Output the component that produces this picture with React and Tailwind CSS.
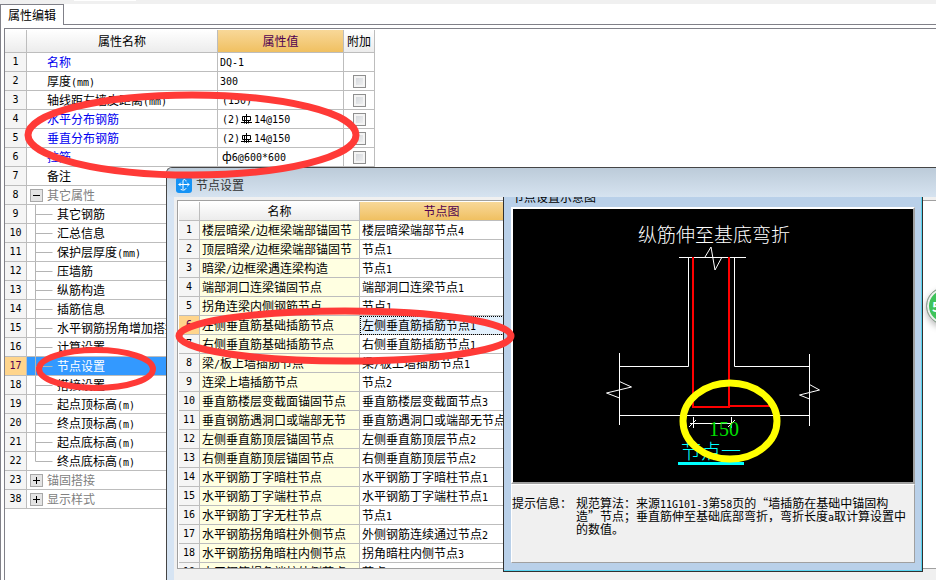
import React from "react";

const properties = [
  { no: 1, name: "名称", value: "DQ-1", blue: true, noCheck: true },
  { no: 2, name: "厚度(mm)", value: "300" },
  { no: 3, name: "轴线距左墙皮距离(mm)", value: "(150)", inset: true },
  { no: 4, name: "水平分布钢筋", value: "(2)#14@150", blue: true, inset: true },
  { no: 5, name: "垂直分布钢筋", value: "(2)#14@150", blue: true, inset: true },
  { no: 6, name: "拉筋", value: "ф6@600*600", blue: true, inset: true },
  { no: 7, name: "备注", value: "" },
  { no: 8, name: "其它属性", group: "minus" },
  { no: 9, name: "其它钢筋", child: true },
  { no: 10, name: "汇总信息", child: true },
  { no: 11, name: "保护层厚度(mm)", child: true },
  { no: 12, name: "压墙筋", child: true },
  { no: 13, name: "纵筋构造", child: true },
  { no: 14, name: "插筋信息", child: true },
  { no: 15, name: "水平钢筋拐角增加搭接", child: true },
  { no: 16, name: "计算设置", child: true },
  { no: 17, name: "节点设置", child: true, selected: true },
  { no: 18, name: "搭接设置", child: true },
  { no: 19, name: "起点顶标高(m)", child: true },
  { no: 20, name: "终点顶标高(m)", child: true },
  { no: 21, name: "起点底标高(m)", child: true },
  { no: 22, name: "终点底标高(m)", child: true, last: true },
  { no: 23, name: "锚固搭接", group: "plus" },
  { no: 38, name: "显示样式", group: "plus" },
];

const nodes = [
  ["楼层暗梁/边框梁端部锚固节", "楼层暗梁端部节点4"],
  ["顶层暗梁/边框梁端部锚固节", "节点1"],
  ["暗梁/边框梁遇连梁构造", "节点1"],
  ["端部洞口连梁锚固节点", "端部洞口连梁节点1"],
  ["拐角连梁内侧钢筋节点", "节点1"],
  ["左侧垂直筋基础插筋节点", "左侧垂直筋插筋节点1"],
  ["右侧垂直筋基础插筋节点", "右侧垂直筋插筋节点1"],
  ["梁/板上墙插筋节点", "梁/板上墙插筋节点1"],
  ["连梁上墙插筋节点", "节点2"],
  ["垂直筋楼层变截面锚固节点", "垂直筋楼层变截面节点3"],
  ["垂直钢筋遇洞口或端部无节", "垂直筋遇洞口或端部无节点"],
  ["左侧垂直筋顶层锚固节点", "左侧垂直筋顶层节点2"],
  ["右侧垂直筋顶层锚固节点", "右侧垂直筋顶层节点2"],
  ["水平钢筋丁字暗柱节点", "水平钢筋丁字暗柱节点1"],
  ["水平钢筋丁字端柱节点", "水平钢筋丁字端柱节点1"],
  ["水平钢筋丁字无柱节点", "节点1"],
  ["水平钢筋拐角暗柱外侧节点", "外侧钢筋连续通过节点2"],
  ["水平钢筋拐角暗柱内侧节点", "拐角暗柱内侧节点3"],
  ["水平钢筋拐角端柱外侧节点", "节点3"],
];

const SELECTED_NODE = 6;

// Latin runs are set in a narrower mono face beside the Chinese text
const Mixed = ({ text }) =>
  text
    .split(/([\x21-\x7e]+)/)
    .filter(Boolean)
    .map((run, i) =>
      /^[\x21-\x7e]/.test(run) ? (
        <span key={i} className="font-['DejaVu_Sans_Mono',monospace] text-[10px] leading-none">
          {run}
        </span>
      ) : (
        <span key={i}>{run}</span>
      )
    );

// HRB400 rebar grade mark
const RebarMark = () => (
  <svg viewBox="0 0 14 12" className="inline-block h-3 w-[14px] align-[-2px]" fill="none" stroke="#000">
    <path d="M6.5 1v10M2.5 3.5h8v4h-8zM1 9.5h11M4.5 3.5v7M8.5 7.5v3" />
  </svg>
);

const Value = ({ text }) => {
  const [before, after] = text.split("#");
  return (
    <>
      <Mixed text={before} />
      {after && <RebarMark />}
      {after && <Mixed text={after} />}
    </>
  );
};

const numberCell = "border-r border-b border-[#bdbdbd] text-center font-['DejaVu_Sans_Mono',monospace] text-[10px]";
const headCell = "border-r border-b border-[#bdbdbd] bg-linear-to-b from-white to-[#ececec] font-normal";
const hotHeadCell =
  "border-r border-b border-[#bdbdbd] bg-linear-to-b from-[#f8d898] to-[#f0c060] font-normal text-[#500050]";

const Branch = ({ row }) => (
  <svg viewBox="0 0 30 19" className="h-[19px] w-[30px] shrink-0" fill="none" stroke="#b4b4b4">
    <path d={row.last ? "M8.5 0v9.5h17" : "M8.5 0v19M8.5 9.5h17"} />
  </svg>
);

const GroupBox = ({ kind, label }) => (
  <button
    aria-label={label}
    className="mr-[4px] ml-[3px] flex h-[13px] w-[13px] shrink-0 items-center justify-center border border-[#a8a8a8] bg-[#e4e4e4]"
  >
    <svg viewBox="0 0 9 9" className="h-[9px] w-[9px]" stroke="#000">
      <path d={kind === "plus" ? "M1 4.5h7M4.5 1v7" : "M1 4.5h7"} />
    </svg>
  </button>
);

const NameCell = ({ row }) => {
  if (row.group) {
    return (
      <div className="flex items-center text-[#808080]">
        <GroupBox kind={row.group} label={row.name} />
        <Mixed text={row.name} />
      </div>
    );
  }
  if (row.child) {
    return (
      <div className="flex h-[18px] items-center">
        <Branch row={row} />
        <span className="whitespace-nowrap">
          <Mixed text={row.name} />
        </span>
      </div>
    );
  }
  return (
    <div className={`pl-5 ${row.blue ? "text-[#0000f0]" : ""}`}>
      <Mixed text={row.name} />
    </div>
  );
};

const PropertyTable = () => (
  <table className="w-[370px] table-fixed border-separate border-spacing-0 leading-4">
    <colgroup>
      <col className="w-[22px]" />
      <col className="w-[191px]" />
      <col className="w-[126px]" />
      <col className="w-[31px]" />
    </colgroup>
    <thead>
      <tr className="h-[23px]">
        <th className={headCell}></th>
        <th className={headCell}>属性名称</th>
        <th className={hotHeadCell}>属性值</th>
        <th className={`${headCell} whitespace-nowrap`}>附加</th>
      </tr>
    </thead>
    <tbody>
      {properties.map((row) => (
        <tr key={row.no} className={`h-[19px] ${row.selected ? "bg-[#3399ff] text-white" : ""}`}>
          <td className={`${numberCell} ${row.selected ? "bg-[#ffd58c] text-[#500050]" : "bg-[#f5f5f5]"}`}>
            {row.no}
          </td>
          <td className="overflow-hidden border-r border-b border-[#bdbdbd]">
            <NameCell row={row} />
          </td>
          <td className={`border-r border-b border-[#bdbdbd] [&_span]:leading-4 ${row.inset ? "pl-1" : "pl-0.5"}`}>
            {row.value && <Value text={row.value} />}
          </td>
          <td className="border-r border-b border-[#bdbdbd]">
            {row.value && !row.noCheck && (
              <input
                type="checkbox"
                aria-label={row.name}
                className="mx-auto block h-[13px] w-[13px] appearance-none border border-[#8f8f8f] bg-linear-to-br from-[#cfd3d8] to-[#f4f4f4] shadow-[inset_0_0_0_2px_#f4f4f4]"
              />
            )}
          </td>
        </tr>
      ))}
    </tbody>
  </table>
);

const NodeTable = () => (
  <table className="w-full table-fixed border-separate border-spacing-0 leading-4">
    <colgroup>
      <col className="w-[21px]" />
      <col className="w-[160px]" />
      <col className="w-[164px]" />
      <col />
    </colgroup>
    <thead>
      <tr className="h-[19px]">
        <th className={headCell}></th>
        <th className={headCell}>名称</th>
        <th className={hotHeadCell}>节点图</th>
        <th></th>
      </tr>
    </thead>
    <tbody>
      {nodes.map(([name, figure], i) => {
        const active = i + 1 === SELECTED_NODE;
        return (
          <tr key={name} className="h-[19px]">
            <td className={`${numberCell} ${active ? "bg-[#ffd58c] text-[#500050]" : "bg-[#f5f5f5]"}`}>{i + 1}</td>
            <td className="overflow-hidden border-r border-b border-[#bdbdbd] bg-[#ffffe1] pl-0.5 whitespace-nowrap">
              <Mixed text={name} />
            </td>
            <td
              className={`overflow-hidden border-r border-b border-[#bdbdbd] pl-0.5 whitespace-nowrap ${
                active ? "bg-[#e3f1fd] outline-1 -outline-offset-1 outline-black outline-dotted" : ""
              }`}
            >
              <Mixed text={figure} />
            </td>
            <td></td>
          </tr>
        );
      })}
    </tbody>
  </table>
);

const Diagram = () => (
  <svg viewBox="513 209 400 273" className="block h-[273px] w-full bg-black" fill="none">
    <g stroke="#fff">
      <path d="M679 257.5h67M688.5 257.5v109H619.5M734.5 257.5v109H809.5" />
      <path d="M619.5 353v72M809.5 354v72M619.5 415.5h190" />
      <path d="M705 257l6-10 4 23 7-13" />
      <path d="M619.5 381.5l12 5.5-25 6 13 5" />
      <path d="M809.5 384.5l10 5.5-20 5 10 4" />
      <path d="M693.5 417v11M731.5 417v11M690 423.5h41M689 427l7-7M728 427l7-7" />
    </g>
    <g stroke="#f00" strokeWidth="2">
      <path d="M693 257v150h37M729 257v149h41" />
    </g>
    <text x="638" y="242" fill="#fff" fontSize="19" fontFamily="Noto Sans CJK SC, sans-serif" fontWeight="300">
      纵筋伸至基底弯折
    </text>
    <text x="709" y="436" fill="#00e000" fontSize="20" fontFamily="Liberation Serif, serif">
      150
    </text>
    <text x="681" y="459" fill="#0ff" fontSize="20" fontFamily="Noto Sans CJK SC, sans-serif" fontWeight="300">
      节点一
    </text>
    <path d="M678 463.5h66" stroke="#0ff" strokeWidth="3" />
    <ellipse cx="730" cy="421" rx="47" ry="38" stroke="#ff0" strokeWidth="7" />
  </svg>
);

const FigureWindow = () => (
  <section className="absolute top-[29px] left-[336px] h-[375px] w-[420px] overflow-hidden border border-t-0 border-[#303030] bg-[#b9d0e9] shadow-[inset_-1px_-1px_0_#58d4f0]">
    <div className="-mt-2 ml-2 h-[18px] leading-4">节点设置示意图</div>
    <div className="mx-[7px] border-t-2 border-r-2 border-b-2 border-l-2 border-t-white border-r-[#a0a0a0] border-b-[#a0a0a0] border-l-white">
      <Diagram />
    </div>
    <div className="mx-[7px] flex h-[79px] gap-1 border border-t-white border-r-[#a0a0a0] border-b-[#a0a0a0] border-l-white bg-[#f0f0f0] pt-3 leading-3">
      <span className="w-[60px] shrink-0">提示信息：</span>
      <p className="whitespace-nowrap">
        <Mixed text="规范算法：来源11G101-3第58页的“墙插筋在基础中锚固构" />
        <br />
        <Mixed text="造”节点；垂直筋伸至基础底部弯折，弯折长度a取计算设置中" />
        <br />
        <Mixed text="的数值。" />
      </p>
    </div>
  </section>
);

const NodeDialog = () => (
  <section className="absolute top-[167px] right-0 bottom-0 left-[166px] overflow-hidden rounded-tl-md border-t border-l border-[#454545] bg-[#d6e4f3]">
    <header className="flex h-[29px] items-center gap-1 bg-linear-to-b from-[#bccbd9] to-[#d6e3f0] pt-1 pl-[9px] text-[#333]">
      <svg viewBox="0 0 16 16" className="h-4 w-4" fill="none" stroke="#fff" strokeLinecap="round">
        <rect width="16" height="16" rx="3" fill="#1593f5" stroke="none" />
        <path d="M10 4c0-2-3-2-3 0v8M3 7.500h10M4.500 6L3 7.500 4.500 9M11.500 6L13 7.500 11.500 9M5 12.500c2 1 4 1 5-1" />
      </svg>
      <h2>节点设置</h2>
    </header>
    <div className="ml-[7px] h-full bg-[#f0f0f0] pt-[3px] pl-[3px]">
      <div className="h-[369px] overflow-hidden border-t border-b border-l border-[#a0a0a0] bg-white pt-px pl-px">
        <NodeTable />
      </div>
    </div>
    <FigureWindow />
  </section>
);

const Marks = () => (
  <svg className="pointer-events-none absolute inset-0 h-full w-full" fill="none" stroke="#ff3a37" strokeWidth="7">
    <ellipse cx="192" cy="135" rx="164" ry="40" />
    <ellipse cx="96" cy="369" rx="57" ry="19" strokeWidth="6" />
    <ellipse cx="345" cy="336" rx="166" ry="25" />
  </svg>
);

export default function App() {
  return (
    <main className="relative flex min-h-screen flex-col overflow-hidden bg-white font-['Noto_Sans_CJK_SC',sans-serif] text-[12px] text-black">
      <div className="h-1 bg-[#f0f0f0] pl-[74px]">
        <div className="h-px w-[62px] bg-white" />
      </div>
      <nav className="flex h-[21px]">
        <button className="w-16 border-t border-r border-l border-[#808088]">属性编辑</button>
        <div className="flex-1 border-b border-[#808088]" />
      </nav>
      <div className="flex flex-1 border-l border-[#808088] pt-[3px] pl-[3px]">
        <div className="flex-1 border-t border-l border-[#808088] pt-px">
          <PropertyTable />
        </div>
      </div>
      <NodeDialog />
      <Marks />
      <div className="absolute top-[287px] -right-7 flex h-[38px] w-[38px] items-center rounded-full border border-[#999] bg-[#3fc35a] pl-[5px] text-[14px] font-bold text-white shadow-[inset_0_0_0_2px_#eee,0_3px_6px_#0004]">
        5
      </div>
    </main>
  );
}
